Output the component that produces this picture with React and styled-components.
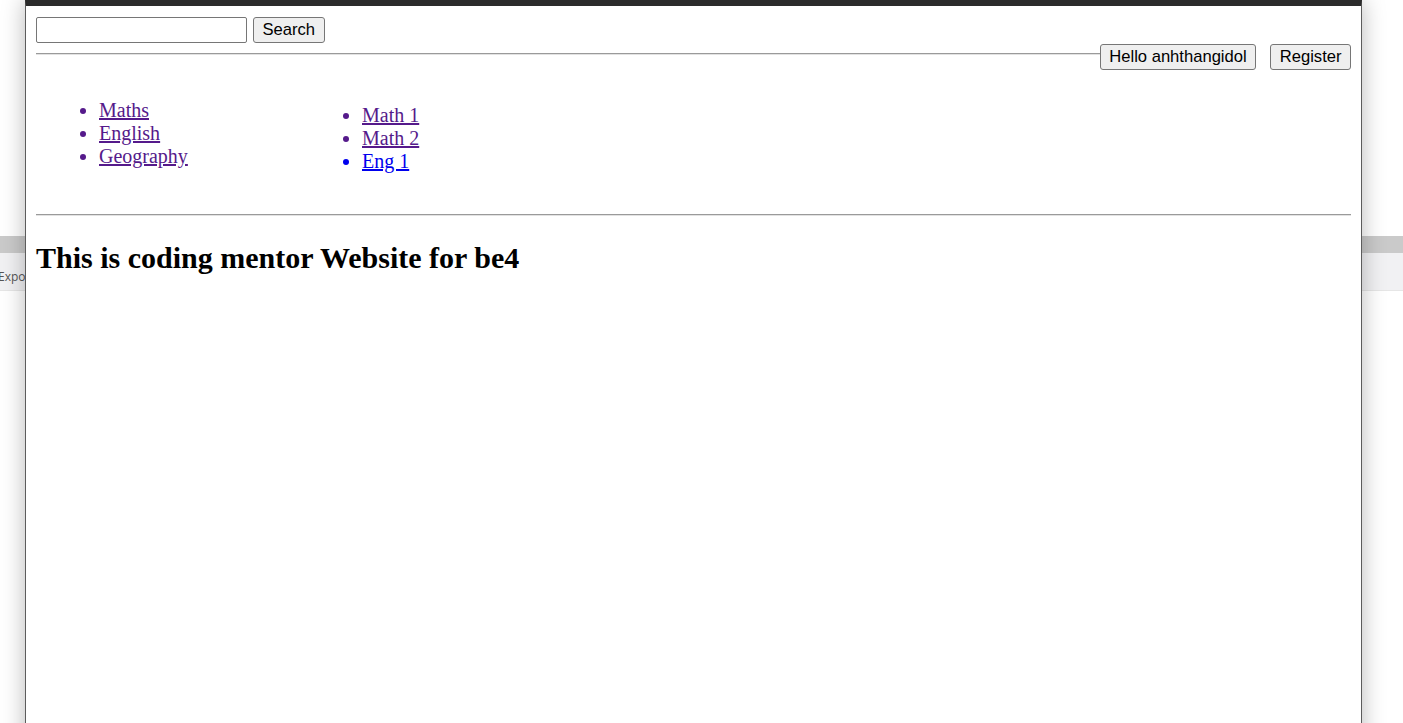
import styled, { createGlobalStyle } from "styled-components";

const GlobalStyle = createGlobalStyle`
  html, body {
    margin: 0;
    padding: 0;
    background: #ffffff;
  }
`;

const leftLinks = [
  { label: "Maths", visited: true },
  { label: "English", visited: true },
  { label: "Geography", visited: true },
];

const rightLinks = [
  { label: "Math 1", visited: true },
  { label: "Math 2", visited: true },
  { label: "Eng 1", visited: false },
];

export default function App() {
  return (
    <>
      <GlobalStyle />
      <Desktop>
        <Backdrop>
          <BandDark />
          <BandLight>
            <BackdropLabel>Export</BackdropLabel>
          </BandLight>
        </Backdrop>

        <Window>
          <Content>
            <Header>
              <SearchForm>
                <SearchInput type="text" />
                <Button>Search</Button>
              </SearchForm>
              <Rule />
              <UserBar>
                <Button>Hello anhthangidol</Button>
                <Button>Register</Button>
              </UserBar>
            </Header>

            <Menu>
              <LinkList $top={44} $width={263}>
                {leftLinks.map((l) => (
                  <Item key={l.label} $visited={l.visited}>
                    <Link href="#" onClick={(e) => e.preventDefault()}>
                      {l.label}
                    </Link>
                  </Item>
                ))}
              </LinkList>
              <LinkList $top={49}>
                {rightLinks.map((l) => (
                  <Item key={l.label} $visited={l.visited}>
                    <Link href="#" onClick={(e) => e.preventDefault()}>
                      {l.label}
                    </Link>
                  </Item>
                ))}
              </LinkList>
            </Menu>

            <Rule $top={41} />
            <Title>This is coding mentor Website for be4</Title>
          </Content>
        </Window>
      </Desktop>
    </>
  );
}

const Desktop = styled.div`
  position: relative;
  height: 723px;
  overflow: hidden;
  background: #ffffff;
`;

const Backdrop = styled.div`
  display: flex;
  flex-direction: column;
  padding-top: 236px;
`;

const BandDark = styled.div`
  height: 17px;
  background: #cacaca;
`;

const BandLight = styled.div`
  height: 38px;
  background: #f1f1f3;
  display: flex;
  align-items: flex-end;
  padding-bottom: 5px;
  box-sizing: border-box;
  border-bottom: 1px solid #e6e6e6;
`;

const BackdropLabel = styled.span`
  font-family: "Open Sans", "Liberation Sans", sans-serif;
  font-size: 12px;
  color: #555;
  margin-left: -2px;
  white-space: nowrap;
`;

/* the popup window floating over the page behind it */
const Window = styled.div`
  position: absolute;
  top: 0;
  left: 25px;
  width: 1337px;
  height: 760px;
  box-sizing: border-box;
  background: #ffffff;
  border-top: 6px solid #2b2b2b;
  border-left: 1px solid #5c5c5c;
  border-right: 1px solid #5c5c5c;
  box-shadow: 0 0 22px rgba(0, 0, 0, 0.28);
`;

const Content = styled.div`
  padding: 11px 10px 10px;
  font-family: "Liberation Serif", "Times New Roman", serif;
`;

const Header = styled.div`
  position: relative;
`;

const SearchForm = styled.div`
  display: flex;
  align-items: center;
  gap: 6px;
`;

const SearchInput = styled.input`
  width: 211px;
  height: 26px;
  box-sizing: border-box;
  border: 1px solid #767676;
  border-radius: 2px;
  padding: 1px 3px;
  font-size: 16px;
  background: #fff;
  outline: none;
`;

const Button = styled.button`
  height: 26px;
  box-sizing: border-box;
  padding: 0 8.5px;
  background: #efefef;
  border: 1px solid #767676;
  border-radius: 3px;
  font-family: "Liberation Sans", Arial, sans-serif;
  font-size: 16.6px;
  color: #000;
  line-height: 1;
`;

const Rule = styled.hr`
  margin: ${(p) => p.$top ?? 10}px 0 0;
  height: 0;
  border: none;
  border-top: 1px solid #9a9a9a;
  border-bottom: 1px solid #e2e2e2;
`;

const UserBar = styled.div`
  position: absolute;
  top: 27px;
  right: 0;
  display: flex;
  gap: 14px;
  background: #ffffff;
`;

const Menu = styled.div`
  display: flex;
  align-items: flex-start;
  padding-left: 13px;
`;

const LinkList = styled.ul`
  margin: ${(p) => p.$top}px 0 0;
  padding-left: 50px;
  width: ${(p) => (p.$width ? `${p.$width}px` : "auto")};
  box-sizing: border-box;
  flex-shrink: 0;
  font-size: 20px;
  line-height: 23px;
`;

const Item = styled.li`
  color: ${(p) => (p.$visited ? "#551a8b" : "#0000ee")};
`;

const Link = styled.a`
  color: inherit;
  text-decoration: underline;
`;

const Title = styled.h2`
  margin: 25px 0 0;
  font-size: 30px;
  font-weight: bold;
  color: #000;
`;
